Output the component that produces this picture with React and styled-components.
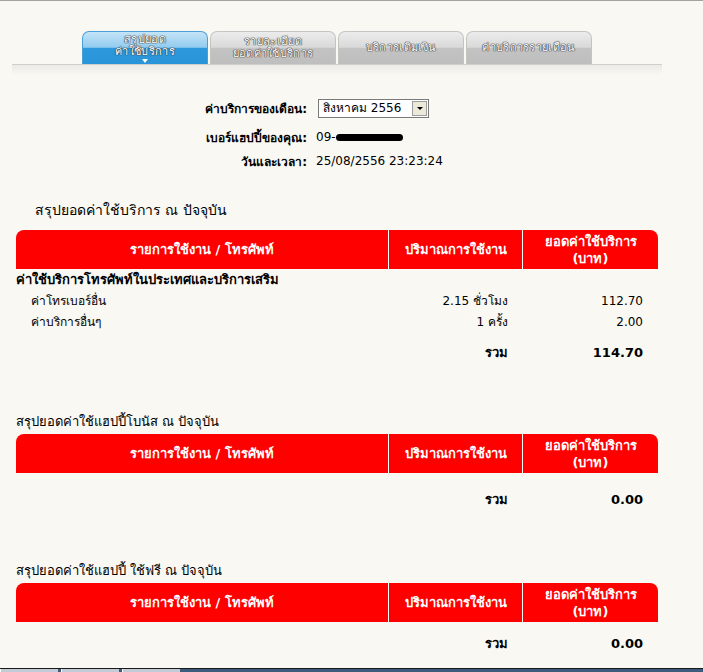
import React from "react";
import styled, { createGlobalStyle } from "styled-components";

const Global = createGlobalStyle`
  html, body { margin: 0; padding: 0; background: #f9f8f3; }
  body { font-family: Tahoma, "DejaVu Sans", "Noto Sans", sans-serif; color: #000; }
`;

const Page = styled.div`
  width: 703px;
  height: 672px;
  display: flex;
  flex-direction: column;
  border-top: 1px solid #a3a3a0;
  box-sizing: border-box;
  overflow: hidden;
`;

const Main = styled.div`
  flex: 1;
  overflow: hidden;
`;

const TabArea = styled.div`
  margin: 30px 0 0 12px;
  width: 650px;
`;

const TabRow = styled.div`
  display: flex;
  gap: 2px;
  padding-left: 70px;
`;

const Tab = styled.div`
  width: 126px;
  height: 33px;
  box-sizing: border-box;
  border: 1px solid ${(p) => (p.$active ? "#4c9ed6" : "#c4c4c4")};
  border-bottom: none;
  border-radius: 7px 7px 0 0;
  background: ${(p) =>
    p.$active
      ? "linear-gradient(#c4e3f7 0%, #92ccef 48%, #2d98dc 50%, #2a94d8 100%)"
      : "linear-gradient(#ececec 0%, #d9d9d9 48%, #c3c3c3 50%, #bebebe 100%)"};
  color: #fff;
  font-size: 11px;
  line-height: 12px;
  text-align: center;
  display: flex;
  flex-direction: column;
  align-items: center;
  justify-content: center;
  text-shadow: 0 0 1px #444, 0 0 1px #444, 0 0 1px #444, 0 0 1px #444;
  letter-spacing: 0.3px;
`;

const TabArrow = styled.span`
  width: 0;
  height: 0;
  border-left: 3px solid transparent;
  border-right: 3px solid transparent;
  border-top: 4px solid #fff;
  margin-top: 1px;
`;

const TabLine = styled.div`
  height: 1px;
  background: #cfcfcb;
`;

const TabShadow = styled.div`
  height: 10px;
  background: linear-gradient(#ebeae6, #f9f8f3);
`;

const Form = styled.div`
  margin: 21px 0 0 150px;
  display: flex;
  flex-direction: column;
`;

const FormRow = styled.div`
  display: flex;
  align-items: center;
  height: 24px;
  margin-bottom: ${(p) => p.$gap || 0}px;
  font-size: 12px;
`;

const Label = styled.div`
  width: 157px;
  text-align: right;
  font-weight: bold;
  padding-right: 9px;
`;

const Value = styled.div`
  display: flex;
  align-items: center;
`;

const Select = styled.div`
  display: flex;
  align-items: stretch;
  width: 111px;
  height: 19px;
  box-sizing: border-box;
  border: 1px solid #7a7a7a;
  background: #fff;
  margin-left: 2px;
`;

const SelectText = styled.span`
  flex: 1;
  padding-left: 4px;
  font-size: 12px;
  line-height: 17px;
`;

const SelectButton = styled.span`
  width: 15px;
  margin: 1px;
  background: #ece9d8;
  border: 1px solid #9c9c9c;
  box-sizing: border-box;
  display: flex;
  align-items: center;
  justify-content: center;
  &::after {
    content: "";
    border-left: 3px solid transparent;
    border-right: 3px solid transparent;
    border-top: 3px solid #000;
  }
`;

const Redact = styled.span`
  display: inline-block;
  width: 67px;
  height: 7px;
  background: #000;
  border-radius: 4px;
`;

const Heading = styled.div`
  margin: ${(p) => p.$mt}px 0 0 ${(p) => p.$ml}px;
  font-size: ${(p) => p.$size}px;
  line-height: 18px;
`;

const Table = styled.table`
  margin: ${(p) => p.$mt}px 0 0 16px;
  width: 642px;
  border-collapse: separate;
  border-spacing: 0;
  font-size: 12px;
  table-layout: fixed;
`;

const Th = styled.th`
  background: #fe0000;
  color: #fff;
  font-weight: bold;
  font-size: 13px;
  line-height: 17px;
  height: 39px;
  padding: 0 4px;
  box-sizing: border-box;
  text-align: center;
  border-left: ${(p) => (p.$first ? "none" : "1px solid #fff")};
  width: ${(p) => p.$w}px;
  &:first-child { border-top-left-radius: 8px; }
  &:last-child { border-top-right-radius: 8px; }
`;

const Td = styled.td`
  height: 21px;
  padding: ${(p) => p.$pt || 0}px ${(p) => (p.$right ? p.$pr : 0)}px 0
    ${(p) => p.$pl || 0}px;
  text-align: ${(p) => (p.$right ? "right" : "left")};
  font-weight: ${(p) => (p.$bold ? "bold" : "normal")};
  font-size: ${(p) => p.$size || 12}px;
  white-space: nowrap;
  vertical-align: middle;
`;

const Taskbar = styled.div`
  height: 4px;
  display: flex;
  background: #3d5c7c;
  border-top: 1px solid #1a1a1a;
  box-sizing: border-box;
`;

const TaskButton = styled.div`
  width: 57px;
  margin-right: 3px;
  background: #c3ccd6;
  border-left: 1px solid #fff;
`;

const TableHead = () => (
  <thead>
    <tr>
      <Th $first $w={372}>รายการใช้งาน / โทรศัพท์</Th>
      <Th $w={134}>ปริมาณการใช้งาน</Th>
      <Th $w={136}>
        ยอดค่าใช้บริการ
        <br />
        (บาท)
      </Th>
    </tr>
  </thead>
);

const TotalRow = ({ pt, value }) => (
  <tr>
    <Td $pt={pt}></Td>
    <Td $pt={pt} $right $pr={14} $bold $size={13}>รวม</Td>
    <Td $pt={pt} $right $pr={15} $bold $size={13}>{value}</Td>
  </tr>
);

export default function App() {
  return (
    <>
      <Global />
      <Page>
        <Main>
          <TabArea>
            <TabRow>
              <Tab $active>
                <span>สรุปยอด</span>
                <span>ค่าใช้บริการ</span>
                <TabArrow />
              </Tab>
              <Tab>
                <span>รายละเอียด</span>
                <span>ยอดค่าใช้บริการ</span>
              </Tab>
              <Tab>
                <span>บริการเติมเงิน</span>
              </Tab>
              <Tab>
                <span>ค่าบริการรายเดือน</span>
              </Tab>
            </TabRow>
            <TabLine />
            <TabShadow />
          </TabArea>

          <Form>
            <FormRow $gap={5}>
              <Label>ค่าบริการของเดือน:</Label>
              <Value>
                <Select>
                  <SelectText>สิงหาคม 2556</SelectText>
                  <SelectButton />
                </Select>
              </Value>
            </FormRow>
            <FormRow>
              <Label>เบอร์แฮปปี้ของคุณ:</Label>
              <Value>
                09-<Redact />
              </Value>
            </FormRow>
            <FormRow>
              <Label>วันและเวลา:</Label>
              <Value>25/08/2556 23:23:24</Value>
            </FormRow>
          </Form>

          <Heading $mt={28} $ml={35} $size={14}>
            สรุปยอดค่าใช้บริการ ณ ปัจจุบัน
          </Heading>
          <Table $mt={11}>
            <TableHead />
            <tbody>
              <tr>
                <Td $bold $size={13} colSpan={3}>
                  ค่าใช้บริการโทรศัพท์ในประเทศและบริการเสริม
                </Td>
              </tr>
              <tr>
                <Td $pl={15}>ค่าโทรเบอร์อื่น</Td>
                <Td $right $pr={14}>2.15 ชั่วโมง</Td>
                <Td $right $pr={15}>112.70</Td>
              </tr>
              <tr>
                <Td $pl={15}>ค่าบริการอื่นๆ</Td>
                <Td $right $pr={14}>1 ครั้ง</Td>
                <Td $right $pr={15}>2.00</Td>
              </tr>
              <TotalRow pt={10} value="114.70" />
            </tbody>
          </Table>

          <Heading $mt={50} $ml={16} $size={13}>
            สรุปยอดค่าใช้แฮปปี้โบนัส ณ ปัจจุบัน
          </Heading>
          <Table $mt={3}>
            <TableHead />
            <tbody>
              <TotalRow pt={16} value="0.00" />
            </tbody>
          </Table>

          <Heading $mt={52} $ml={16} $size={13}>
            สรุปยอดค่าใช้แฮปปี้ ใช้ฟรี ณ ปัจจุบัน
          </Heading>
          <Table $mt={3}>
            <TableHead />
            <tbody>
              <TotalRow pt={11} value="0.00" />
            </tbody>
          </Table>
        </Main>
        <Taskbar>
          <TaskButton />
          <TaskButton />
          <TaskButton />
        </Taskbar>
      </Page>
    </>
  );
}
